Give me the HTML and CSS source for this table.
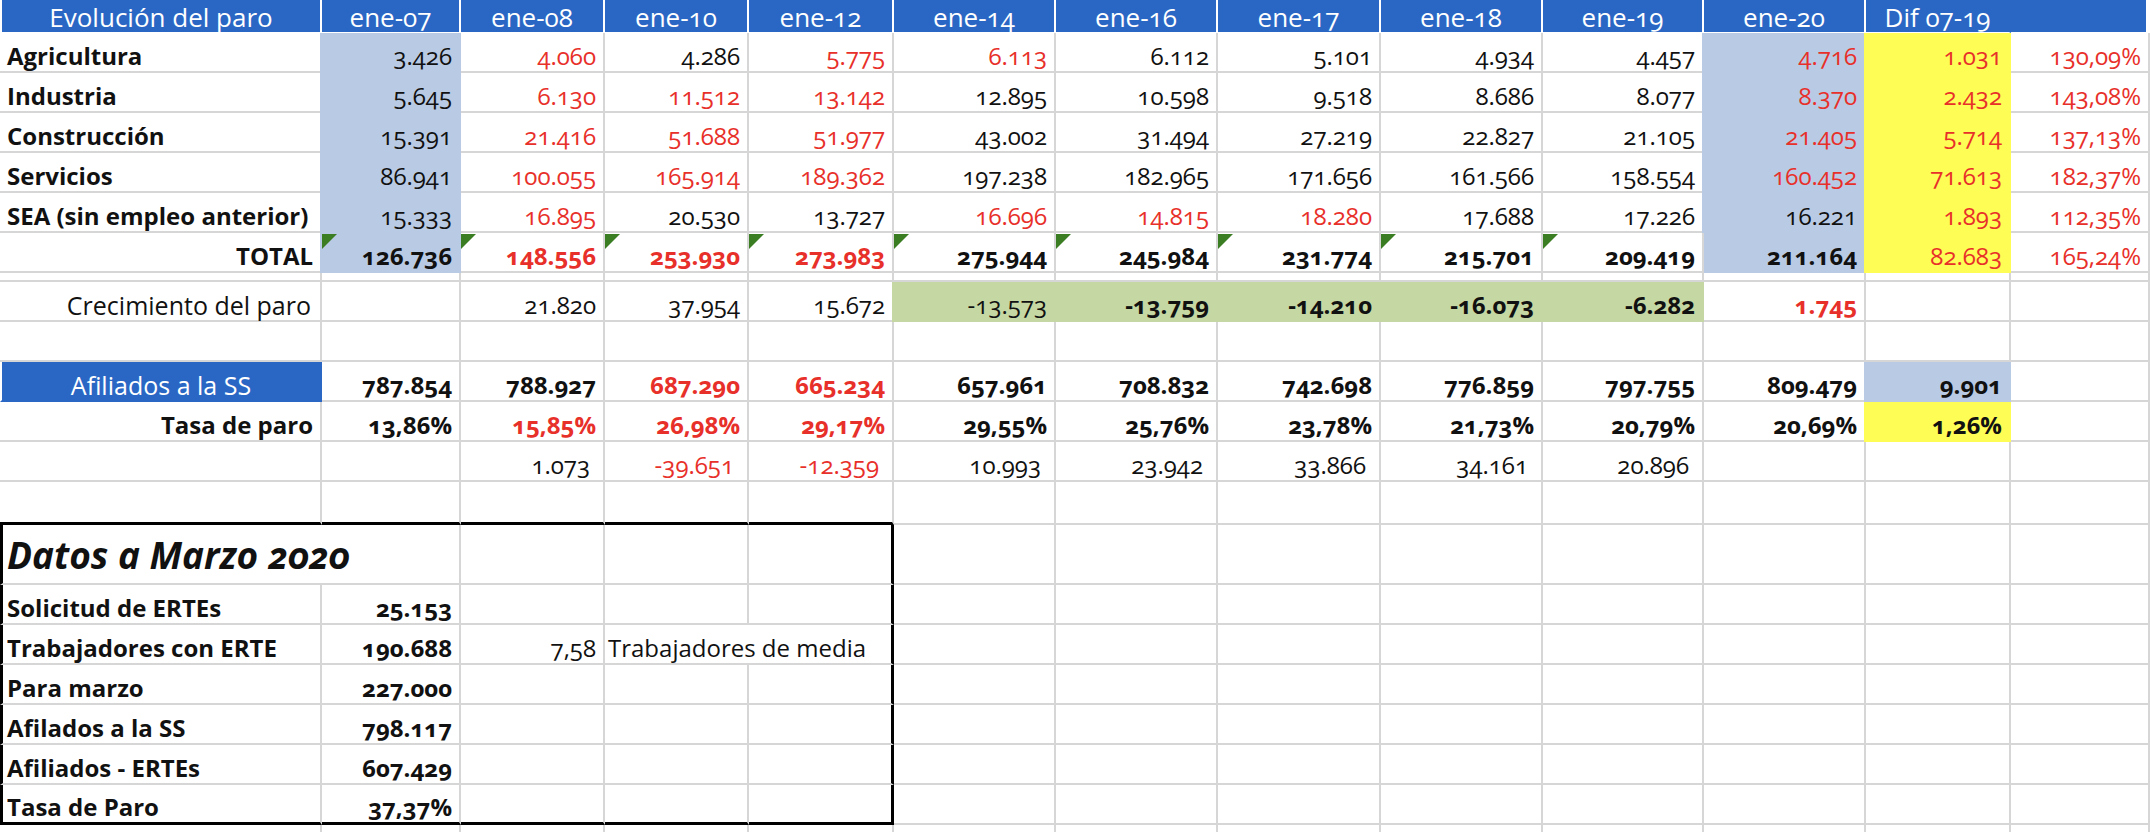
FILE: index.html
```html
<!DOCTYPE html>
<html lang="es">
<head>
<meta charset="utf-8">
<title>Evolución del paro</title>
<link rel="stylesheet" href="styles.css">
</head>
<body>
<div class="sheet">
  <!-- header -->
  <div class="c h first">Evolución del paro</div>
  <div class="c h">ene-07</div>
  <div class="c h">ene-08</div>
  <div class="c h">ene-10</div>
  <div class="c h">ene-12</div>
  <div class="c h">ene-14</div>
  <div class="c h">ene-16</div>
  <div class="c h">ene-17</div>
  <div class="c h">ene-18</div>
  <div class="c h">ene-19</div>
  <div class="c h">ene-20</div>
  <div class="c h nosep">Dif 07-19</div>
  <div class="c h last"></div>

  <!-- Agricultura -->
  <div class="c l b">Agricultura</div>
  <div class="c n fb">3.426</div>
  <div class="c n red">4.060</div>
  <div class="c n">4.286</div>
  <div class="c n red">5.775</div>
  <div class="c n red">6.113</div>
  <div class="c n">6.112</div>
  <div class="c n">5.101</div>
  <div class="c n">4.934</div>
  <div class="c n">4.457</div>
  <div class="c n fb red">4.716</div>
  <div class="c n fy red">1.031</div>
  <div class="c n red">130,09%</div>

  <!-- Industria -->
  <div class="c l b">Industria</div>
  <div class="c n fb">5.645</div>
  <div class="c n red">6.130</div>
  <div class="c n red">11.512</div>
  <div class="c n red">13.142</div>
  <div class="c n">12.895</div>
  <div class="c n">10.598</div>
  <div class="c n">9.518</div>
  <div class="c n">8.686</div>
  <div class="c n">8.077</div>
  <div class="c n fb red">8.370</div>
  <div class="c n fy red">2.432</div>
  <div class="c n red">143,08%</div>

  <!-- Construcción -->
  <div class="c l b">Construcción</div>
  <div class="c n fb">15.391</div>
  <div class="c n red">21.416</div>
  <div class="c n red">51.688</div>
  <div class="c n red">51.977</div>
  <div class="c n">43.002</div>
  <div class="c n">31.494</div>
  <div class="c n">27.219</div>
  <div class="c n">22.827</div>
  <div class="c n">21.105</div>
  <div class="c n fb red">21.405</div>
  <div class="c n fy red">5.714</div>
  <div class="c n red">137,13%</div>

  <!-- Servicios -->
  <div class="c l b">Servicios</div>
  <div class="c n fb">86.941</div>
  <div class="c n red">100.055</div>
  <div class="c n red">165.914</div>
  <div class="c n red">189.362</div>
  <div class="c n">197.238</div>
  <div class="c n">182.965</div>
  <div class="c n">171.656</div>
  <div class="c n">161.566</div>
  <div class="c n">158.554</div>
  <div class="c n fb red">160.452</div>
  <div class="c n fy red">71.613</div>
  <div class="c n red">182,37%</div>

  <!-- SEA -->
  <div class="c l b">SEA (sin empleo anterior)</div>
  <div class="c n fb">15.333</div>
  <div class="c n red">16.895</div>
  <div class="c n">20.530</div>
  <div class="c n">13.727</div>
  <div class="c n red">16.696</div>
  <div class="c n red">14.815</div>
  <div class="c n red">18.280</div>
  <div class="c n">17.688</div>
  <div class="c n">17.226</div>
  <div class="c n fb">16.221</div>
  <div class="c n fy red">1.893</div>
  <div class="c n red">112,35%</div>

  <!-- TOTAL -->
  <div class="c n b">TOTAL</div>
  <div class="c n fb b tri">126.736</div>
  <div class="c n b red tri">148.556</div>
  <div class="c n b red tri">253.930</div>
  <div class="c n b red tri">273.983</div>
  <div class="c n b tri">275.944</div>
  <div class="c n b tri">245.984</div>
  <div class="c n b tri">231.774</div>
  <div class="c n b tri">215.701</div>
  <div class="c n b tri">209.419</div>
  <div class="c n fb b">211.164</div>
  <div class="c n fy red">82.683</div>
  <div class="c n red">165,24%</div>

  <!-- thin spacer row -->
  <div class="c"></div><div class="c"></div><div class="c"></div><div class="c"></div>
  <div class="c"></div><div class="c"></div><div class="c"></div><div class="c"></div>
  <div class="c"></div><div class="c"></div><div class="c"></div><div class="c"></div>
  <div class="c"></div>

  <!-- Crecimiento del paro -->
  <div class="c n lbl-reg">Crecimiento del paro</div>
  <div class="c"></div>
  <div class="c n">21.820</div>
  <div class="c n">37.954</div>
  <div class="c n">15.672</div>
  <div class="c n fg">-13.573</div>
  <div class="c n fg b">-13.759</div>
  <div class="c n fg b">-14.210</div>
  <div class="c n fg b">-16.073</div>
  <div class="c n fg b">-6.282</div>
  <div class="c n b red">1.745</div>
  <div class="c"></div>
  <div class="c"></div>

  <!-- empty row -->
  <div class="c"></div><div class="c"></div><div class="c"></div><div class="c"></div>
  <div class="c"></div><div class="c"></div><div class="c"></div><div class="c"></div>
  <div class="c"></div><div class="c"></div><div class="c"></div><div class="c"></div>
  <div class="c"></div>

  <!-- Afiliados a la SS -->
  <div class="c fa">Afiliados a la SS</div>
  <div class="c n b">787.854</div>
  <div class="c n b">788.927</div>
  <div class="c n b red">687.290</div>
  <div class="c n b red">665.234</div>
  <div class="c n b">657.961</div>
  <div class="c n b">708.832</div>
  <div class="c n b">742.698</div>
  <div class="c n b">776.859</div>
  <div class="c n b">797.755</div>
  <div class="c n b">809.479</div>
  <div class="c n fb b">9.901</div>
  <div class="c"></div>

  <!-- Tasa de paro -->
  <div class="c n b">Tasa de paro</div>
  <div class="c n b">13,86%</div>
  <div class="c n b red">15,85%</div>
  <div class="c n b red">26,98%</div>
  <div class="c n b red">29,17%</div>
  <div class="c n b">29,55%</div>
  <div class="c n b">25,76%</div>
  <div class="c n b">23,78%</div>
  <div class="c n b">21,73%</div>
  <div class="c n b">20,79%</div>
  <div class="c n b">20,69%</div>
  <div class="c n fy b">1,26%</div>
  <div class="c"></div>

  <!-- diferencias -->
  <div class="c"></div>
  <div class="c"></div>
  <div class="c n pad">1.073</div>
  <div class="c n pad red">-39.651</div>
  <div class="c n pad red">-12.359</div>
  <div class="c n pad">10.993</div>
  <div class="c n pad">23.942</div>
  <div class="c n pad">33.866</div>
  <div class="c n pad">34.161</div>
  <div class="c n pad">20.896</div>
  <div class="c"></div>
  <div class="c"></div>
  <div class="c"></div>

  <!-- empty row above box -->
  <div class="c kb"></div><div class="c kb"></div><div class="c kb"></div><div class="c kb"></div>
  <div class="c kb"></div><div class="c"></div><div class="c"></div><div class="c"></div>
  <div class="c"></div><div class="c"></div><div class="c"></div><div class="c"></div>
  <div class="c"></div>

  <!-- Datos a Marzo 2020 -->
  <div class="c l kl title span2">Datos a Marzo 2020</div>
  <div class="c"></div>
  <div class="c"></div>
  <div class="c kr"></div>
  <div class="c"></div><div class="c"></div><div class="c"></div><div class="c"></div>
  <div class="c"></div><div class="c"></div><div class="c"></div><div class="c"></div>

  <div class="c l b kl">Solicitud de ERTEs</div>
  <div class="c n b">25.153</div>
  <div class="c"></div>
  <div class="c"></div>
  <div class="c kr"></div>
  <div class="c"></div><div class="c"></div><div class="c"></div><div class="c"></div>
  <div class="c"></div><div class="c"></div><div class="c"></div><div class="c"></div>

  <div class="c l b kl">Trabajadores con ERTE</div>
  <div class="c n b">190.688</div>
  <div class="c n">7,58</div>
  <div class="c l over">Trabajadores de media</div>
  <div class="c kr"></div>
  <div class="c"></div><div class="c"></div><div class="c"></div><div class="c"></div>
  <div class="c"></div><div class="c"></div><div class="c"></div><div class="c"></div>

  <div class="c l b kl">Para marzo</div>
  <div class="c n b">227.000</div>
  <div class="c"></div>
  <div class="c"></div>
  <div class="c kr"></div>
  <div class="c"></div><div class="c"></div><div class="c"></div><div class="c"></div>
  <div class="c"></div><div class="c"></div><div class="c"></div><div class="c"></div>

  <div class="c l b kl">Afilados a la SS</div>
  <div class="c n b">798.117</div>
  <div class="c"></div>
  <div class="c"></div>
  <div class="c kr"></div>
  <div class="c"></div><div class="c"></div><div class="c"></div><div class="c"></div>
  <div class="c"></div><div class="c"></div><div class="c"></div><div class="c"></div>

  <div class="c l b kl">Afiliados - ERTEs</div>
  <div class="c n b">607.429</div>
  <div class="c"></div>
  <div class="c"></div>
  <div class="c kr"></div>
  <div class="c"></div><div class="c"></div><div class="c"></div><div class="c"></div>
  <div class="c"></div><div class="c"></div><div class="c"></div><div class="c"></div>

  <div class="c l b kl kb">Tasa de Paro</div>
  <div class="c n b kb">37,37%</div>
  <div class="c kb"></div>
  <div class="c kb"></div>
  <div class="c kr kb"></div>
  <div class="c"></div><div class="c"></div><div class="c"></div><div class="c"></div>
  <div class="c"></div><div class="c"></div><div class="c"></div><div class="c"></div>

  <!-- cut-off row -->
  <div class="c end"></div><div class="c end"></div><div class="c end"></div><div class="c end"></div>
  <div class="c end"></div><div class="c end"></div><div class="c end"></div><div class="c end"></div>
  <div class="c end"></div><div class="c end"></div><div class="c end"></div><div class="c end"></div>
  <div class="c end"></div>
</div>
</body>
</html>
```

FILE: styles.css
```css
html, body {
  margin: 0;
  padding: 0;
  background: #ffffff;
}

body {
  font-family: "Open Sans", "Noto Sans", "Liberation Sans", sans-serif;
  color: #111111;
  font-variant-numeric: oldstyle-nums;
  overflow: hidden;
}

.sheet {
  display: grid;
  width: 2150px;
  grid-template-columns: 322px 139px 144px 144px 145px 162px 162px 163px 162px 161px 162px 145px 139px;
  grid-template-rows: 33px repeat(6, 40px) 9px repeat(5, 40px) 43px 60px repeat(6, 40px) 7px;
}

.c {
  box-sizing: border-box;
  min-width: 0;
  display: flex;
  align-items: flex-end;
  padding: 0 7px;
  border-right: 2px solid #d6d6d6;
  border-bottom: 2px solid #d6d6d6;
  font-size: 24px;
  line-height: 30px;
  white-space: nowrap;
}

.n { justify-content: flex-end; }
.l { justify-content: flex-start; }
.b { font-weight: 700; }
.red { color: #e8302a; }
.pad { padding-right: 13px; }
.lbl-reg { padding-right: 9px; font-size: 25px; }

/* header */
.h {
  background: #2a67c5;
  color: #ffffff;
  font-size: 26px;
  justify-content: center;
  border-right: 2px solid #ffffff;
  border-bottom: 1px solid #ffffff;
}
.h.first { border-left: 2px solid #ffffff; }
.h.nosep { border-right-color: #2a67c5; }
.h.last { border-right: 4px solid #ffffff; }

/* fills (hide gridlines like a spreadsheet) */
.fb, .fy, .fg { margin-left: -2px; }
.fb { background: #b9cbe4; border-color: #b9cbe4; }
.fy { background: #fefd55; border-color: #fefd55; }
.fg { background: #c5d8a3; border-color: #c5d8a3; }

.fa {
  background: #2a67c5;
  color: #ffffff;
  font-size: 25px;
  justify-content: center;
  border-left: 2px solid #ffffff;
  border-right-color: #2a67c5;
  border-bottom-color: #2a67c5;
}

/* formula warning triangle */
.tri { position: relative; }
.tri::before {
  content: "";
  position: absolute;
  left: 0;
  top: 1px;
  border-top: 15px solid #3a7d22;
  border-right: 15px solid transparent;
}
.fb.tri::before { left: 2px; }

/* "Datos a Marzo" block */
.kb { border-bottom: 3px solid #000000; }
.kl { border-left: 3px solid #000000; padding-left: 4px; }
.kr { border-right: 3px solid #000000; }
.span2 { grid-column: span 2; }
.title {
  font-size: 37px;
  line-height: 40px;
  font-weight: 700;
  font-style: italic;
  padding-bottom: 8px;
}
.over {
  padding-left: 3px;
  border-right: none;
  overflow: visible;
}

.end { border-bottom: none; }
```
